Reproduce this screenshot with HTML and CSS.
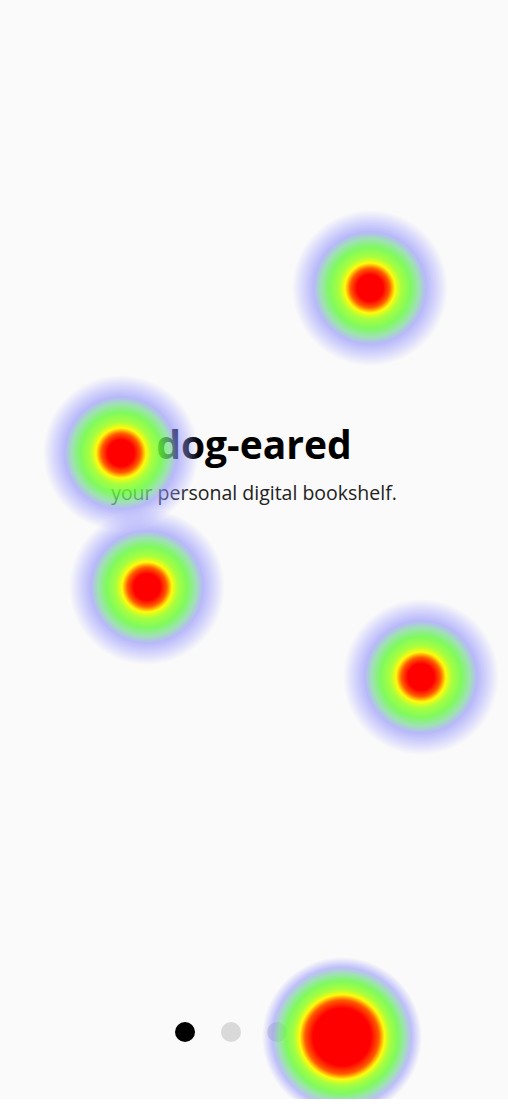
FILE: index.html
```html
<!DOCTYPE html>
<html lang="en">
<head>
    <meta charset="UTF-8">
    <meta name="viewport" content="width=device-width, initial-scale=1.0">
    <title>dog-eared</title>
    <link rel="stylesheet" href="styles.css">
</head>
<body>
    <div class="screen">
        <main class="slide">
            <h1 class="title">dog-eared</h1>
            <p class="subtitle">your personal digital bookshelf.</p>
        </main>

        <nav class="dots">
            <span class="dot active"></span>
            <span class="dot"></span>
            <span class="dot"></span>
            <span class="dot"></span>
        </nav>

        <!-- tap heatmap overlay -->
        <div class="heat" style="left: 370px; top: 288px;"></div>
        <div class="heat" style="left: 121px; top: 453px;"></div>
        <div class="heat" style="left: 147px; top: 587px;"></div>
        <div class="heat" style="left: 421px; top: 677px;"></div>
        <div class="heat hot" style="left: 342px; top: 1037px;"></div>
    </div>
</body>
</html>
```

FILE: styles.css
```css
/* General Styles */
html, body {
    margin: 0;
    padding: 0;
    background-color: #fff;
}

body {
    font-family: "Open Sans", "Noto Sans", sans-serif;
    color: #111;
    overflow: hidden;
}

.screen {
    position: relative;
    height: 1099px;
    background-color: #fafafa;
    display: flex;
    flex-direction: column;
}

/* Slide content */
.slide {
    height: 925px;
    display: flex;
    flex-direction: column;
    align-items: center;
    justify-content: center;
}

.title {
    margin: 0 0 9px;
    font-size: 39px;
    font-weight: 700;
    line-height: 52px;
    color: #000;
}

.subtitle {
    margin: 0;
    font-size: 19.5px;
    line-height: 28px;
    color: #222;
}

/* Page indicator */
.dots {
    flex: 1;
    display: flex;
    justify-content: center;
    align-items: flex-start;
    gap: 26px;
    padding-top: 97px;
}

.dot {
    width: 20px;
    height: 20px;
    border-radius: 50%;
    background-color: #d9d9d9;
}

.dot.active {
    background-color: #000;
}

/* Heatmap blobs */
.heat {
    position: absolute;
    width: 156px;
    height: 156px;
    margin: -78px 0 0 -78px;
    border-radius: 50%;
    pointer-events: none;
    background: radial-gradient(circle closest-side,
        rgba(255, 0, 0, 1) 0%,
        rgba(255, 0, 0, 1) 17%,
        rgba(255, 90, 0, 1) 25%,
        rgba(255, 250, 0, 0.95) 32%,
        rgba(160, 255, 40, 0.9) 40%,
        rgba(100, 250, 60, 0.82) 52%,
        rgba(120, 215, 150, 0.7) 63%,
        rgba(140, 140, 250, 0.6) 72%,
        rgba(160, 160, 255, 0.38) 86%,
        rgba(180, 180, 255, 0) 100%);
}

.heat.hot {
    width: 160px;
    height: 160px;
    margin: -80px 0 0 -80px;
    background: radial-gradient(circle closest-side,
        rgba(255, 0, 0, 1) 0%,
        rgba(255, 0, 0, 1) 36%,
        rgba(255, 90, 0, 1) 46%,
        rgba(255, 250, 0, 0.95) 53%,
        rgba(160, 255, 40, 0.9) 60%,
        rgba(100, 250, 60, 0.82) 70%,
        rgba(120, 215, 150, 0.7) 79%,
        rgba(140, 140, 250, 0.55) 87%,
        rgba(180, 180, 255, 0) 100%);
}
```
